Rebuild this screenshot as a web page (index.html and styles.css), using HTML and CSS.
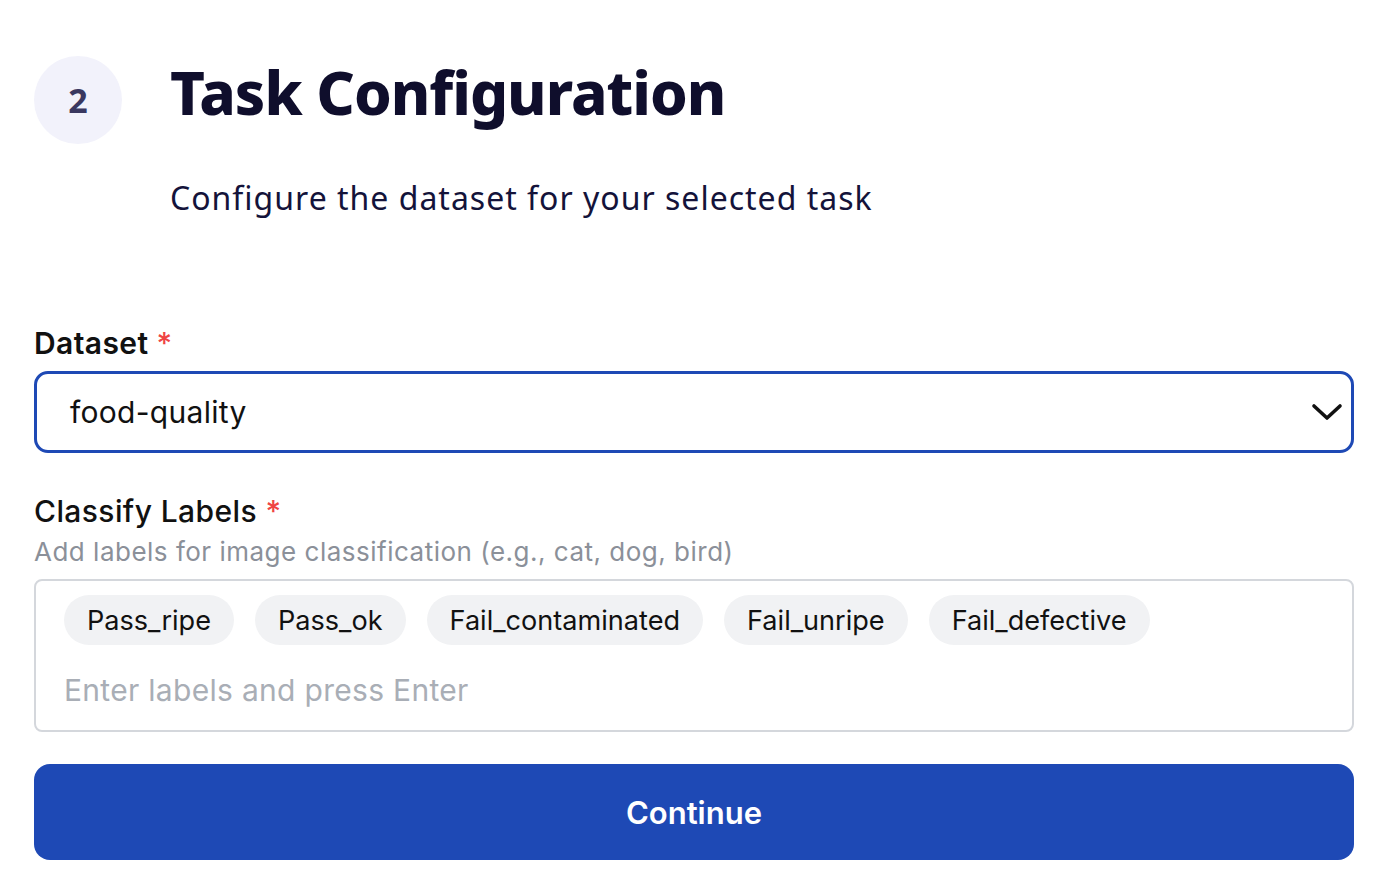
FILE: index.html
```html
<!DOCTYPE html>
<html lang="en">
<head>
    <meta charset="UTF-8">
    <meta name="viewport" content="width=device-width, initial-scale=1.0">
    <title>Task Configuration</title>
    <link rel="stylesheet" href="styles.css">
</head>
<body>

<div class="page">
    <div class="step-header">
        <div class="step-number">2</div>
        <div class="step-text">
            <h1>Task Configuration</h1>
            <p class="step-desc">Configure the dataset for your selected task</p>
        </div>
    </div>

    <form class="config-form">
        <div class="field">
            <label class="field-label">Dataset <span class="required">*</span></label>
            <div class="select-box">
                <span>food-quality</span>
                <svg class="chevron" width="32" height="20" viewBox="0 0 32 20" fill="none">
                    <path d="M3 4 L16 16 L29 4" stroke="#111" stroke-width="3.6" stroke-linecap="round" stroke-linejoin="round"/>
                </svg>
            </div>
        </div>

        <div class="field labels-field">
            <label class="field-label">Classify Labels <span class="required">*</span></label>
            <p class="field-help">Add labels for image classification (e.g., cat, dog, bird)</p>
            <div class="tag-box">
                <div class="tags">
                    <span class="tag">Pass_ripe</span>
                    <span class="tag">Pass_ok</span>
                    <span class="tag">Fail_contaminated</span>
                    <span class="tag">Fail_unripe</span>
                    <span class="tag">Fail_defective</span>
                </div>
                <input type="text" class="tag-input" placeholder="Enter labels and press Enter">
            </div>
        </div>

        <button type="submit" class="continue-btn">Continue</button>
    </form>
</div>

</body>
</html>
```

FILE: styles.css
```css
body {
    margin: 0;
    padding: 0;
    background-color: #fff;
    font-family: 'Inter', 'Liberation Sans', sans-serif;
    color: #111;
}

.page {
    padding: 56px 30px 0 34px;
}

.step-header {
    display: flex;
    align-items: flex-start;
    gap: 48px;
}

.step-number {
    width: 88px;
    height: 88px;
    flex-shrink: 0;
    border-radius: 50%;
    background-color: #f2f2fb;
    color: #3a3860;
    font-family: 'Noto Sans', sans-serif;
    font-weight: 700;
    font-size: 34px;
    display: flex;
    align-items: center;
    justify-content: center;
}

h1 {
    margin: 0;
    font-family: 'Noto Sans', sans-serif;
    font-weight: 800;
    font-size: 60px;
    line-height: 72px;
    letter-spacing: -1px;
    color: #0f0e2c;
}

.step-desc {
    margin: 48px 0 0;
    font-family: 'Noto Sans', sans-serif;
    font-size: 32px;
    letter-spacing: 1px;
    color: #14133a;
}

.config-form {
    margin-top: 106px;
}

.field-label {
    display: block;
    font-size: 30px;
    font-weight: 600;
    line-height: 36px;
    letter-spacing: 0.4px;
    color: #111;
}

.required {
    color: #ef4444;
    font-weight: 500;
}

.select-box {
    margin-top: 10px;
    height: 76px;
    border: 3px solid #1e49b5;
    border-radius: 14px;
    display: flex;
    align-items: center;
    justify-content: space-between;
    padding: 0 8px 0 33px;
    font-size: 30px;
    letter-spacing: 0.3px;
}

.labels-field {
    margin-top: 40px;
}

.labels-field .field-label {
    font-weight: 500;
}

.field-help {
    margin: 7px 0 0;
    font-size: 26px;
    letter-spacing: 0.5px;
    color: #8b9099;
}

.tag-box {
    margin-top: 12px;
    border: 2px solid #d4d7dc;
    border-radius: 8px;
    padding: 14px 28px 22px;
}

.tags {
    display: flex;
    flex-wrap: wrap;
    gap: 21px;
}

.tag {
    height: 50px;
    padding: 0 23px;
    border-radius: 25px;
    background-color: #f1f2f4;
    font-size: 27.1px;
    display: flex;
    align-items: center;
}

.tag-input {
    display: block;
    width: 100%;
    margin-top: 27px;
    border: none;
    outline: none;
    padding: 0;
    font-family: inherit;
    font-size: 30px;
    letter-spacing: 0.3px;
    color: #111;
}

.tag-input::placeholder {
    color: #a9aeb6;
}

.continue-btn {
    margin-top: 32px;
    width: 100%;
    height: 96px;
    border: none;
    border-radius: 16px;
    background-color: #1e49b5;
    color: #fff;
    font-family: inherit;
    font-size: 31px;
    font-weight: 600;
    cursor: pointer;
}
```
